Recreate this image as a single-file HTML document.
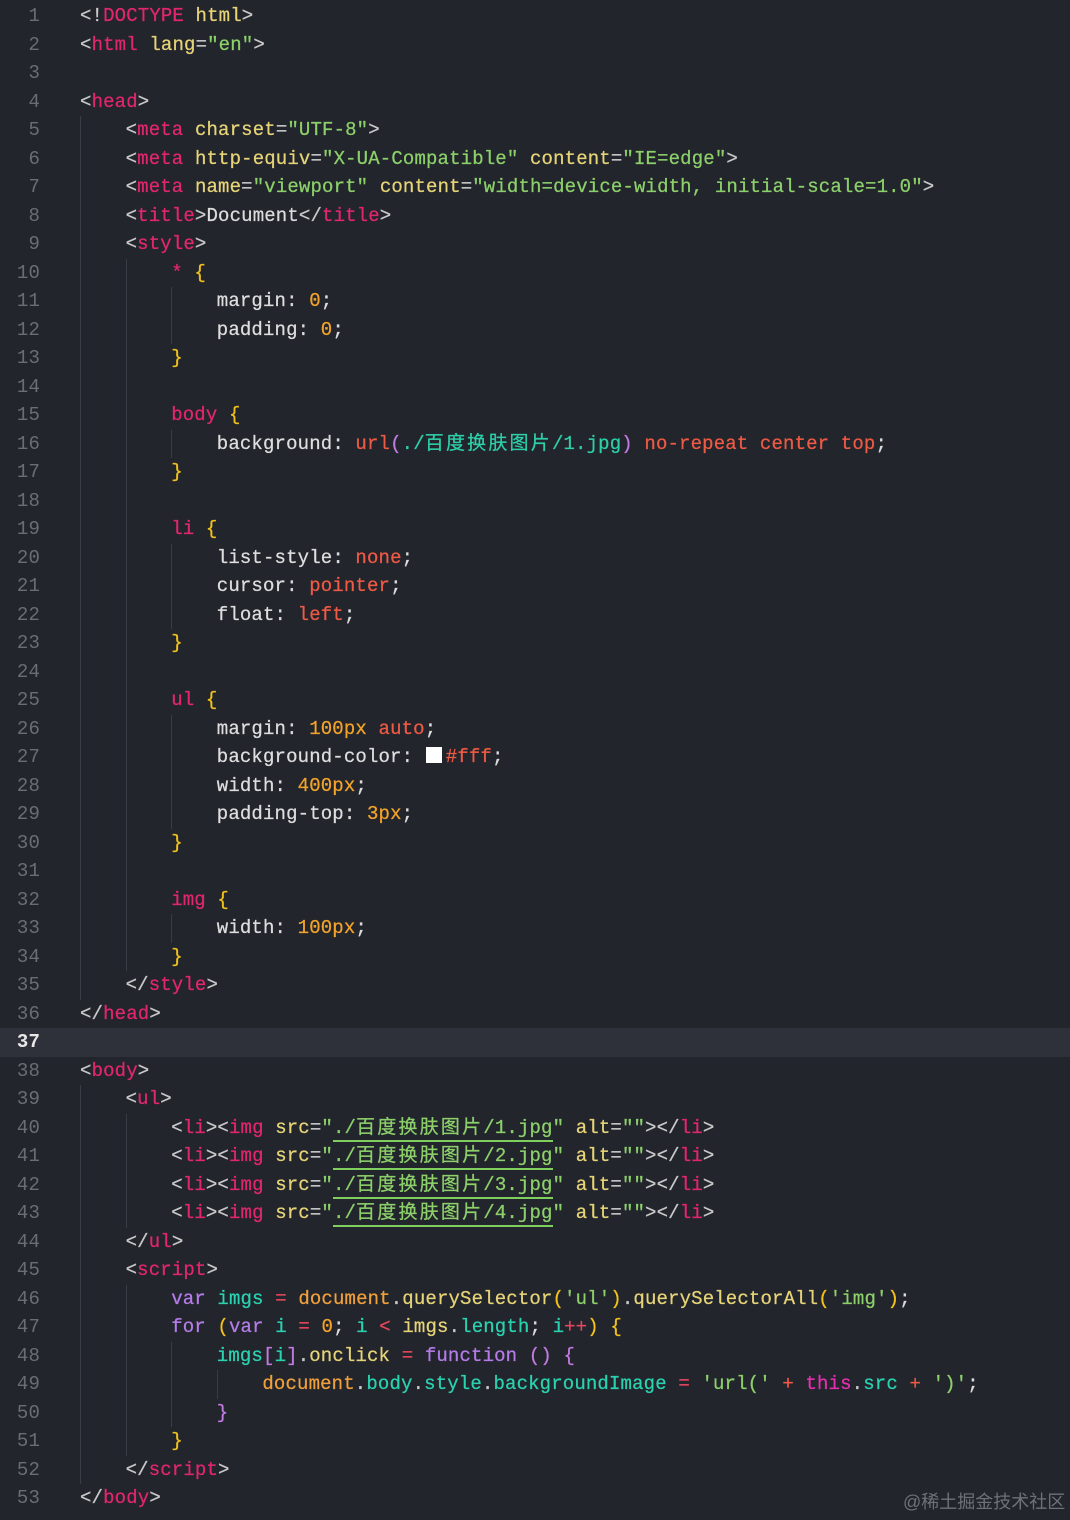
<!DOCTYPE html>
<html lang="en"><head><meta charset="UTF-8">
<style>
*{margin:0;padding:0;box-sizing:border-box}
html,body{width:1070px;height:1520px;background:#23252d;overflow:hidden}
#ed{position:absolute;top:2px;left:0;width:1070px;font-family:"Liberation Mono","Noto Sans CJK SC",monospace;font-size:19px;line-height:28.5px;color:#dcdcdc;letter-spacing:0.15px;-webkit-text-stroke:0.25px}
.l{height:28.5px;white-space:pre;position:relative}
.n{position:absolute;left:0;width:40px;text-align:right;color:#6b6d75;-webkit-text-stroke:0}
.cur{background:#2f313a}
.cur .n{color:#e8e8e8;font-weight:bold}
.t{position:absolute;left:80px;top:0}
.i{display:inline-block;width:45.6px;height:28.5px;vertical-align:top;border-left:1px solid #3a3c45}
.p{color:#c9c9c9}.g{color:#e2266d}.a{color:#e6d477}.s{color:#8cd06a}.y{color:#f2c21b}
.pr{color:#dedede}.nm{color:#f3a329}.kw{color:#ee5a44}.pu{color:#c07ae0}.te{color:#2dcfa8}
.v{color:#b47ce8}.id{color:#2ad3b0}.o{color:#e8465c}.d{color:#f0a03a}.th{color:#e52fae}
.c{letter-spacing:2.2px}
.u{border-bottom:2px solid #7fcf5e;padding-bottom:1px}
.sw{display:inline-block;width:16px;height:16px;background:#fff;margin:0 4px 0 1px;vertical-align:-1px}
#wm{position:absolute;left:903px;top:1488px;font-family:"Liberation Sans","Noto Sans CJK SC",sans-serif;font-size:18px;color:#6f7178}
</style></head><body>
<div id="ed">
<div class="l"><span class="n">1</span><span class="t"><span class="p">&lt;!</span><span class="g">DOCTYPE</span> <span class="a">html</span><span class="p">&gt;</span></span></div>
<div class="l"><span class="n">2</span><span class="t"><span class="p">&lt;</span><span class="g">html</span> <span class="a">lang</span><span class="p">=</span><span class="s">"en"</span><span class="p">&gt;</span></span></div>
<div class="l"><span class="n">3</span></div>
<div class="l"><span class="n">4</span><span class="t"><span class="p">&lt;</span><span class="g">head</span><span class="p">&gt;</span></span></div>
<div class="l"><span class="n">5</span><span class="t"><span class="i"></span><span class="p">&lt;</span><span class="g">meta</span> <span class="a">charset</span><span class="p">=</span><span class="s">"UTF-8"</span><span class="p">&gt;</span></span></div>
<div class="l"><span class="n">6</span><span class="t"><span class="i"></span><span class="p">&lt;</span><span class="g">meta</span> <span class="a">http-equiv</span><span class="p">=</span><span class="s">"X-UA-Compatible"</span> <span class="a">content</span><span class="p">=</span><span class="s">"IE=edge"</span><span class="p">&gt;</span></span></div>
<div class="l"><span class="n">7</span><span class="t"><span class="i"></span><span class="p">&lt;</span><span class="g">meta</span> <span class="a">name</span><span class="p">=</span><span class="s">"viewport"</span> <span class="a">content</span><span class="p">=</span><span class="s">"width=device-width, initial-scale=1.0"</span><span class="p">&gt;</span></span></div>
<div class="l"><span class="n">8</span><span class="t"><span class="i"></span><span class="p">&lt;</span><span class="g">title</span><span class="p">&gt;</span>Document<span class="p">&lt;/</span><span class="g">title</span><span class="p">&gt;</span></span></div>
<div class="l"><span class="n">9</span><span class="t"><span class="i"></span><span class="p">&lt;</span><span class="g">style</span><span class="p">&gt;</span></span></div>
<div class="l"><span class="n">10</span><span class="t"><span class="i"></span><span class="i"></span><span class="g">*</span> <span class="y">{</span></span></div>
<div class="l"><span class="n">11</span><span class="t"><span class="i"></span><span class="i"></span><span class="i"></span><span class="pr">margin</span>: <span class="nm">0</span>;</span></div>
<div class="l"><span class="n">12</span><span class="t"><span class="i"></span><span class="i"></span><span class="i"></span><span class="pr">padding</span>: <span class="nm">0</span>;</span></div>
<div class="l"><span class="n">13</span><span class="t"><span class="i"></span><span class="i"></span><span class="y">}</span></span></div>
<div class="l"><span class="n">14</span><span class="t"><span class="i"></span><span class="i"></span></span></div>
<div class="l"><span class="n">15</span><span class="t"><span class="i"></span><span class="i"></span><span class="g">body</span> <span class="y">{</span></span></div>
<div class="l"><span class="n">16</span><span class="t"><span class="i"></span><span class="i"></span><span class="i"></span><span class="pr">background</span>: <span class="kw">url</span><span class="pu">(</span><span class="te">./<span class="c">百度换肤图片</span>/1.jpg</span><span class="pu">)</span> <span class="kw">no-repeat</span> <span class="kw">center</span> <span class="kw">top</span>;</span></div>
<div class="l"><span class="n">17</span><span class="t"><span class="i"></span><span class="i"></span><span class="y">}</span></span></div>
<div class="l"><span class="n">18</span><span class="t"><span class="i"></span><span class="i"></span></span></div>
<div class="l"><span class="n">19</span><span class="t"><span class="i"></span><span class="i"></span><span class="g">li</span> <span class="y">{</span></span></div>
<div class="l"><span class="n">20</span><span class="t"><span class="i"></span><span class="i"></span><span class="i"></span><span class="pr">list-style</span>: <span class="kw">none</span>;</span></div>
<div class="l"><span class="n">21</span><span class="t"><span class="i"></span><span class="i"></span><span class="i"></span><span class="pr">cursor</span>: <span class="kw">pointer</span>;</span></div>
<div class="l"><span class="n">22</span><span class="t"><span class="i"></span><span class="i"></span><span class="i"></span><span class="pr">float</span>: <span class="kw">left</span>;</span></div>
<div class="l"><span class="n">23</span><span class="t"><span class="i"></span><span class="i"></span><span class="y">}</span></span></div>
<div class="l"><span class="n">24</span><span class="t"><span class="i"></span><span class="i"></span></span></div>
<div class="l"><span class="n">25</span><span class="t"><span class="i"></span><span class="i"></span><span class="g">ul</span> <span class="y">{</span></span></div>
<div class="l"><span class="n">26</span><span class="t"><span class="i"></span><span class="i"></span><span class="i"></span><span class="pr">margin</span>: <span class="nm">100px</span> <span class="kw">auto</span>;</span></div>
<div class="l"><span class="n">27</span><span class="t"><span class="i"></span><span class="i"></span><span class="i"></span><span class="pr">background-color</span>: <span class="sw"></span><span class="kw">#fff</span>;</span></div>
<div class="l"><span class="n">28</span><span class="t"><span class="i"></span><span class="i"></span><span class="i"></span><span class="pr">width</span>: <span class="nm">400px</span>;</span></div>
<div class="l"><span class="n">29</span><span class="t"><span class="i"></span><span class="i"></span><span class="i"></span><span class="pr">padding-top</span>: <span class="nm">3px</span>;</span></div>
<div class="l"><span class="n">30</span><span class="t"><span class="i"></span><span class="i"></span><span class="y">}</span></span></div>
<div class="l"><span class="n">31</span><span class="t"><span class="i"></span><span class="i"></span></span></div>
<div class="l"><span class="n">32</span><span class="t"><span class="i"></span><span class="i"></span><span class="g">img</span> <span class="y">{</span></span></div>
<div class="l"><span class="n">33</span><span class="t"><span class="i"></span><span class="i"></span><span class="i"></span><span class="pr">width</span>: <span class="nm">100px</span>;</span></div>
<div class="l"><span class="n">34</span><span class="t"><span class="i"></span><span class="i"></span><span class="y">}</span></span></div>
<div class="l"><span class="n">35</span><span class="t"><span class="i"></span><span class="p">&lt;/</span><span class="g">style</span><span class="p">&gt;</span></span></div>
<div class="l"><span class="n">36</span><span class="t"><span class="p">&lt;/</span><span class="g">head</span><span class="p">&gt;</span></span></div>
<div class="l cur"><span class="n">37</span></div>
<div class="l"><span class="n">38</span><span class="t"><span class="p">&lt;</span><span class="g">body</span><span class="p">&gt;</span></span></div>
<div class="l"><span class="n">39</span><span class="t"><span class="i"></span><span class="p">&lt;</span><span class="g">ul</span><span class="p">&gt;</span></span></div>
<div class="l"><span class="n">40</span><span class="t"><span class="i"></span><span class="i"></span><span class="p">&lt;</span><span class="g">li</span><span class="p">&gt;&lt;</span><span class="g">img</span> <span class="a">src</span><span class="p">=</span><span class="s">"<span class="u">./<span class="c">百度换肤图片</span>/1.jpg</span>"</span> <span class="a">alt</span><span class="p">=</span><span class="s">""</span><span class="p">&gt;&lt;/</span><span class="g">li</span><span class="p">&gt;</span></span></div>
<div class="l"><span class="n">41</span><span class="t"><span class="i"></span><span class="i"></span><span class="p">&lt;</span><span class="g">li</span><span class="p">&gt;&lt;</span><span class="g">img</span> <span class="a">src</span><span class="p">=</span><span class="s">"<span class="u">./<span class="c">百度换肤图片</span>/2.jpg</span>"</span> <span class="a">alt</span><span class="p">=</span><span class="s">""</span><span class="p">&gt;&lt;/</span><span class="g">li</span><span class="p">&gt;</span></span></div>
<div class="l"><span class="n">42</span><span class="t"><span class="i"></span><span class="i"></span><span class="p">&lt;</span><span class="g">li</span><span class="p">&gt;&lt;</span><span class="g">img</span> <span class="a">src</span><span class="p">=</span><span class="s">"<span class="u">./<span class="c">百度换肤图片</span>/3.jpg</span>"</span> <span class="a">alt</span><span class="p">=</span><span class="s">""</span><span class="p">&gt;&lt;/</span><span class="g">li</span><span class="p">&gt;</span></span></div>
<div class="l"><span class="n">43</span><span class="t"><span class="i"></span><span class="i"></span><span class="p">&lt;</span><span class="g">li</span><span class="p">&gt;&lt;</span><span class="g">img</span> <span class="a">src</span><span class="p">=</span><span class="s">"<span class="u">./<span class="c">百度换肤图片</span>/4.jpg</span>"</span> <span class="a">alt</span><span class="p">=</span><span class="s">""</span><span class="p">&gt;&lt;/</span><span class="g">li</span><span class="p">&gt;</span></span></div>
<div class="l"><span class="n">44</span><span class="t"><span class="i"></span><span class="p">&lt;/</span><span class="g">ul</span><span class="p">&gt;</span></span></div>
<div class="l"><span class="n">45</span><span class="t"><span class="i"></span><span class="p">&lt;</span><span class="g">script</span><span class="p">&gt;</span></span></div>
<div class="l"><span class="n">46</span><span class="t"><span class="i"></span><span class="i"></span><span class="v">var</span> <span class="id">imgs</span> <span class="o">=</span> <span class="d">document</span><span class="p">.</span><span class="a">querySelector</span><span class="y">(</span><span class="s">'ul'</span><span class="y">)</span><span class="p">.</span><span class="a">querySelectorAll</span><span class="y">(</span><span class="s">'img'</span><span class="y">)</span>;</span></div>
<div class="l"><span class="n">47</span><span class="t"><span class="i"></span><span class="i"></span><span class="v">for</span> <span class="y">(</span><span class="v">var</span> <span class="id">i</span> <span class="o">=</span> <span class="nm">0</span>; <span class="id">i</span> <span class="o">&lt;</span> <span class="a">imgs</span><span class="p">.</span><span class="id">length</span>; <span class="id">i</span><span class="o">++</span><span class="y">)</span> <span class="y">{</span></span></div>
<div class="l"><span class="n">48</span><span class="t"><span class="i"></span><span class="i"></span><span class="i"></span><span class="id">imgs</span><span class="pu">[</span><span class="id">i</span><span class="pu">]</span><span class="p">.</span><span class="a">onclick</span> <span class="o">=</span> <span class="v">function</span> <span class="pu">()</span> <span class="pu">{</span></span></div>
<div class="l"><span class="n">49</span><span class="t"><span class="i"></span><span class="i"></span><span class="i"></span><span class="i"></span><span class="d">document</span><span class="p">.</span><span class="id">body</span><span class="p">.</span><span class="id">style</span><span class="p">.</span><span class="id">backgroundImage</span> <span class="o">=</span> <span class="s">'url('</span> <span class="kw">+</span> <span class="th">this</span><span class="p">.</span><span class="id">src</span> <span class="kw">+</span> <span class="s">')'</span>;</span></div>
<div class="l"><span class="n">50</span><span class="t"><span class="i"></span><span class="i"></span><span class="i"></span><span class="pu">}</span></span></div>
<div class="l"><span class="n">51</span><span class="t"><span class="i"></span><span class="i"></span><span class="y">}</span></span></div>
<div class="l"><span class="n">52</span><span class="t"><span class="i"></span><span class="p">&lt;/</span><span class="g">script</span><span class="p">&gt;</span></span></div>
<div class="l"><span class="n">53</span><span class="t"><span class="p">&lt;/</span><span class="g">body</span><span class="p">&gt;</span></span></div>
</div>
<div id="wm">@稀土掘金技术社区</div>
</body></html>
